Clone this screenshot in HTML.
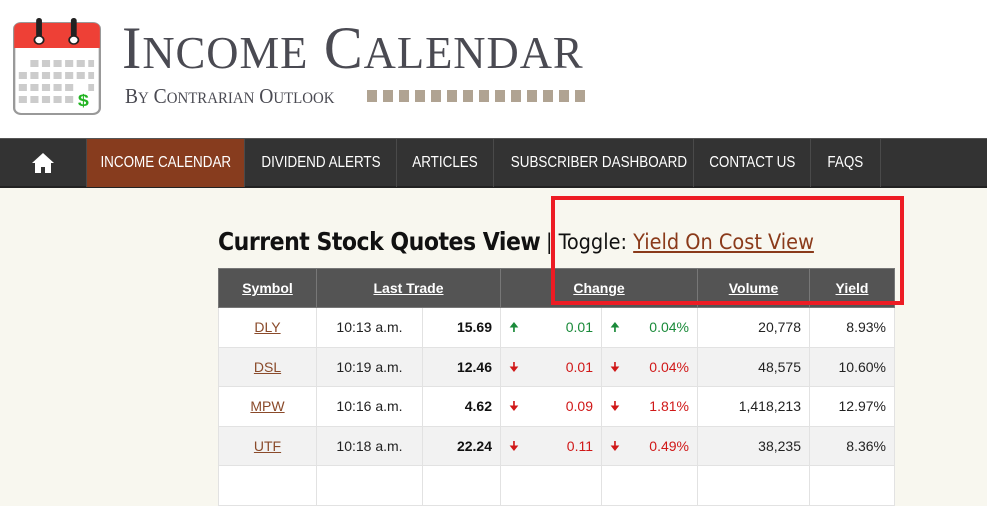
<!DOCTYPE html>
<html><head><meta charset="utf-8"><style>
*{margin:0;padding:0;box-sizing:border-box}
body{width:987px;height:478px;overflow:hidden;background:#f8f7ef;font-family:"Liberation Sans",sans-serif;position:relative}
.hdr{position:absolute;left:0;top:0;width:987px;height:138px;background:#fff}
.nav{position:absolute;left:0;top:138px;width:987px;height:50px;background:#333;border-top:1px solid #555;border-bottom:2px solid #222}
.nav div{position:absolute;top:0;height:48px;line-height:48px;color:#fff;font-size:16px;text-align:center;border-right:1px solid #4a4a4a;white-space:nowrap}
.nav div span{display:inline-block;transform:scaleX(.84)}
.t1{position:absolute;left:122px;top:18px;font-family:"Liberation Serif",serif;color:#4a4a52;font-size:60px;letter-spacing:1px;line-height:60px;white-space:nowrap;transform:scaleX(0.97);transform-origin:left}
.t1 small{font-size:46px}
.t2{position:absolute;left:125px;top:85px;font-family:"Liberation Serif",serif;color:#4a4a52;font-size:21px;line-height:22px;white-space:nowrap;transform:scaleX(0.93);transform-origin:left}
.t2 small{font-size:16px}
.sq{position:absolute;top:90px;width:10px;height:12px;background:#b0a392}
h1{position:absolute;left:218px;top:227px;font-size:24.5px;font-weight:bold;color:#111;font-family:"DejaVu Sans Condensed","Liberation Sans",sans-serif;letter-spacing:-0.5px;white-space:nowrap}
.tg{position:absolute;left:546px;top:230px;font-size:21.5px;color:#111;font-family:"DejaVu Sans Condensed","Liberation Sans",sans-serif;white-space:nowrap}
.tg a{color:#8a3a1a;text-decoration:underline}
.box{position:absolute;left:551px;top:196px;width:353px;height:109px;border:4px solid #ed1c24}
table{position:absolute;left:218px;top:268px;border-collapse:collapse;font-size:14px;table-layout:fixed;width:676px}
th{background:#545454;color:#fff;height:39px;font-size:14px;text-decoration:underline;border:1px solid #777;padding:0}
td{height:39.5px;border:1px solid #e2e2e2;padding:0 8px;color:#222;white-space:nowrap;line-height:16px}
tr.g td{background:#f2f2f2}
tr.w td{background:#fff}
.c{text-align:center}.r{text-align:right}.b{font-weight:bold;color:#111}
.sym{color:#8a4a2a;text-decoration:underline}
.up{color:#1a8a3a}.dn{color:#d01818}
.ar{display:inline-block;width:0;float:left;font-size:12px}
</style></head><body>
<div class="hdr">
<svg style="position:absolute;left:13px;top:18px" width="88" height="98" viewBox="0 0 76 98" preserveAspectRatio="none">
<rect x="1" y="5" width="74" height="91" rx="6" fill="#fff" stroke="#999" stroke-width="2"/>
<path d="M1 30 V11 Q1 5 7 5 H69 Q75 5 75 11 V30 Z" fill="#ee4036"/>
<rect x="20" y="0" width="5" height="20" rx="2.5" fill="#222"/><rect x="50" y="0" width="5" height="20" rx="2.5" fill="#222"/>
<circle cx="22.5" cy="22" r="4" fill="#fff" stroke="#222" stroke-width="1.5"/><circle cx="52.5" cy="22" r="4" fill="#fff" stroke="#222" stroke-width="1.5"/>
<g fill="#ccc">
<rect x="15" y="42" width="7" height="7"/><rect x="25" y="42" width="7" height="7"/><rect x="35" y="42" width="7" height="7"/><rect x="45" y="42" width="7" height="7"/><rect x="55" y="42" width="7" height="7"/><rect x="65" y="42" width="5" height="7"/>
<rect x="5" y="54" width="7" height="7"/><rect x="15" y="54" width="7" height="7"/><rect x="25" y="54" width="7" height="7"/><rect x="35" y="54" width="7" height="7"/><rect x="45" y="54" width="7" height="7"/><rect x="55" y="54" width="7" height="7"/><rect x="65" y="54" width="5" height="7"/>
<rect x="5" y="66" width="7" height="7"/><rect x="15" y="66" width="7" height="7"/><rect x="25" y="66" width="7" height="7"/><rect x="35" y="66" width="7" height="7"/><rect x="45" y="66" width="7" height="7"/><rect x="65" y="66" width="5" height="7"/>
<rect x="5" y="78" width="7" height="7"/><rect x="15" y="78" width="7" height="7"/><rect x="25" y="78" width="7" height="7"/><rect x="35" y="78" width="7" height="7"/><rect x="45" y="78" width="7" height="7"/></g>
<text x="56" y="88" font-family="Liberation Sans" font-weight="bold" font-size="17" fill="#22b422">$</text>
</svg>
<div class="t1">I<small>NCOME</small> C<small>ALENDAR</small></div>
<div class="t2">B<small>Y</small> C<small>ONTRARIAN</small> O<small>UTLOOK</small></div>
<div class="sq" style="left:367px"></div><div class="sq" style="left:383px"></div><div class="sq" style="left:399px"></div><div class="sq" style="left:415px"></div><div class="sq" style="left:431px"></div><div class="sq" style="left:447px"></div><div class="sq" style="left:463px"></div><div class="sq" style="left:479px"></div><div class="sq" style="left:495px"></div><div class="sq" style="left:511px"></div><div class="sq" style="left:527px"></div><div class="sq" style="left:543px"></div><div class="sq" style="left:559px"></div><div class="sq" style="left:575px"></div>
</div>
<div class="nav">
<div style="left:0;width:87px"><svg width="24" height="22" viewBox="0 0 24 22" style="vertical-align:middle"><path d="M12 1 L1 11 L4 11 L4 21 L10 21 L10 15 L14 15 L14 21 L20 21 L20 11 L23 11 Z" fill="#fff"/></svg></div>
<div style="left:87px;width:158px;background:#873c1e"><span>INCOME CALENDAR</span></div>
<div style="left:245px;width:152px"><span>DIVIDEND ALERTS</span></div>
<div style="left:397px;width:97px"><span>ARTICLES</span></div>
<div style="left:494px;width:200px"><span>SUBSCRIBER DASHBOARD</span></div>
<div style="left:694px;width:117px"><span>CONTACT US</span></div>
<div style="left:811px;width:70px"><span>FAQS</span></div>
</div>
<h1>Current Stock Quotes View</h1>
<div class="tg">| Toggle: <a>Yield On Cost View</a></div>
<table>
<colgroup><col style="width:98px"><col style="width:106px"><col style="width:78px"><col style="width:101px"><col style="width:96px"><col style="width:112px"><col style="width:85px"></colgroup>
<tr><th>Symbol</th><th colspan="2">Last Trade</th><th colspan="2">Change</th><th>Volume</th><th>Yield</th></tr>
<tr class="w"><td class="c"><span class="sym">DLY</span></td><td class="c">10:13 a.m.</td><td class="r b">15.69</td><td class="r up"><span class="ar">🠉</span>0.01</td><td class="r up"><span class="ar">🠉</span>0.04%</td><td class="r">20,778</td><td class="r">8.93%</td></tr>
<tr class="g"><td class="c"><span class="sym">DSL</span></td><td class="c">10:19 a.m.</td><td class="r b">12.46</td><td class="r dn"><span class="ar">🠋</span>0.01</td><td class="r dn"><span class="ar">🠋</span>0.04%</td><td class="r">48,575</td><td class="r">10.60%</td></tr>
<tr class="w"><td class="c"><span class="sym">MPW</span></td><td class="c">10:16 a.m.</td><td class="r b">4.62</td><td class="r dn"><span class="ar">🠋</span>0.09</td><td class="r dn"><span class="ar">🠋</span>1.81%</td><td class="r">1,418,213</td><td class="r">12.97%</td></tr>
<tr class="g"><td class="c"><span class="sym">UTF</span></td><td class="c">10:18 a.m.</td><td class="r b">22.24</td><td class="r dn"><span class="ar">🠋</span>0.11</td><td class="r dn"><span class="ar">🠋</span>0.49%</td><td class="r">38,235</td><td class="r">8.36%</td></tr>
<tr class="w"><td></td><td></td><td></td><td></td><td></td><td></td><td></td></tr>
</table>
<div class="box"></div>
</body></html>
